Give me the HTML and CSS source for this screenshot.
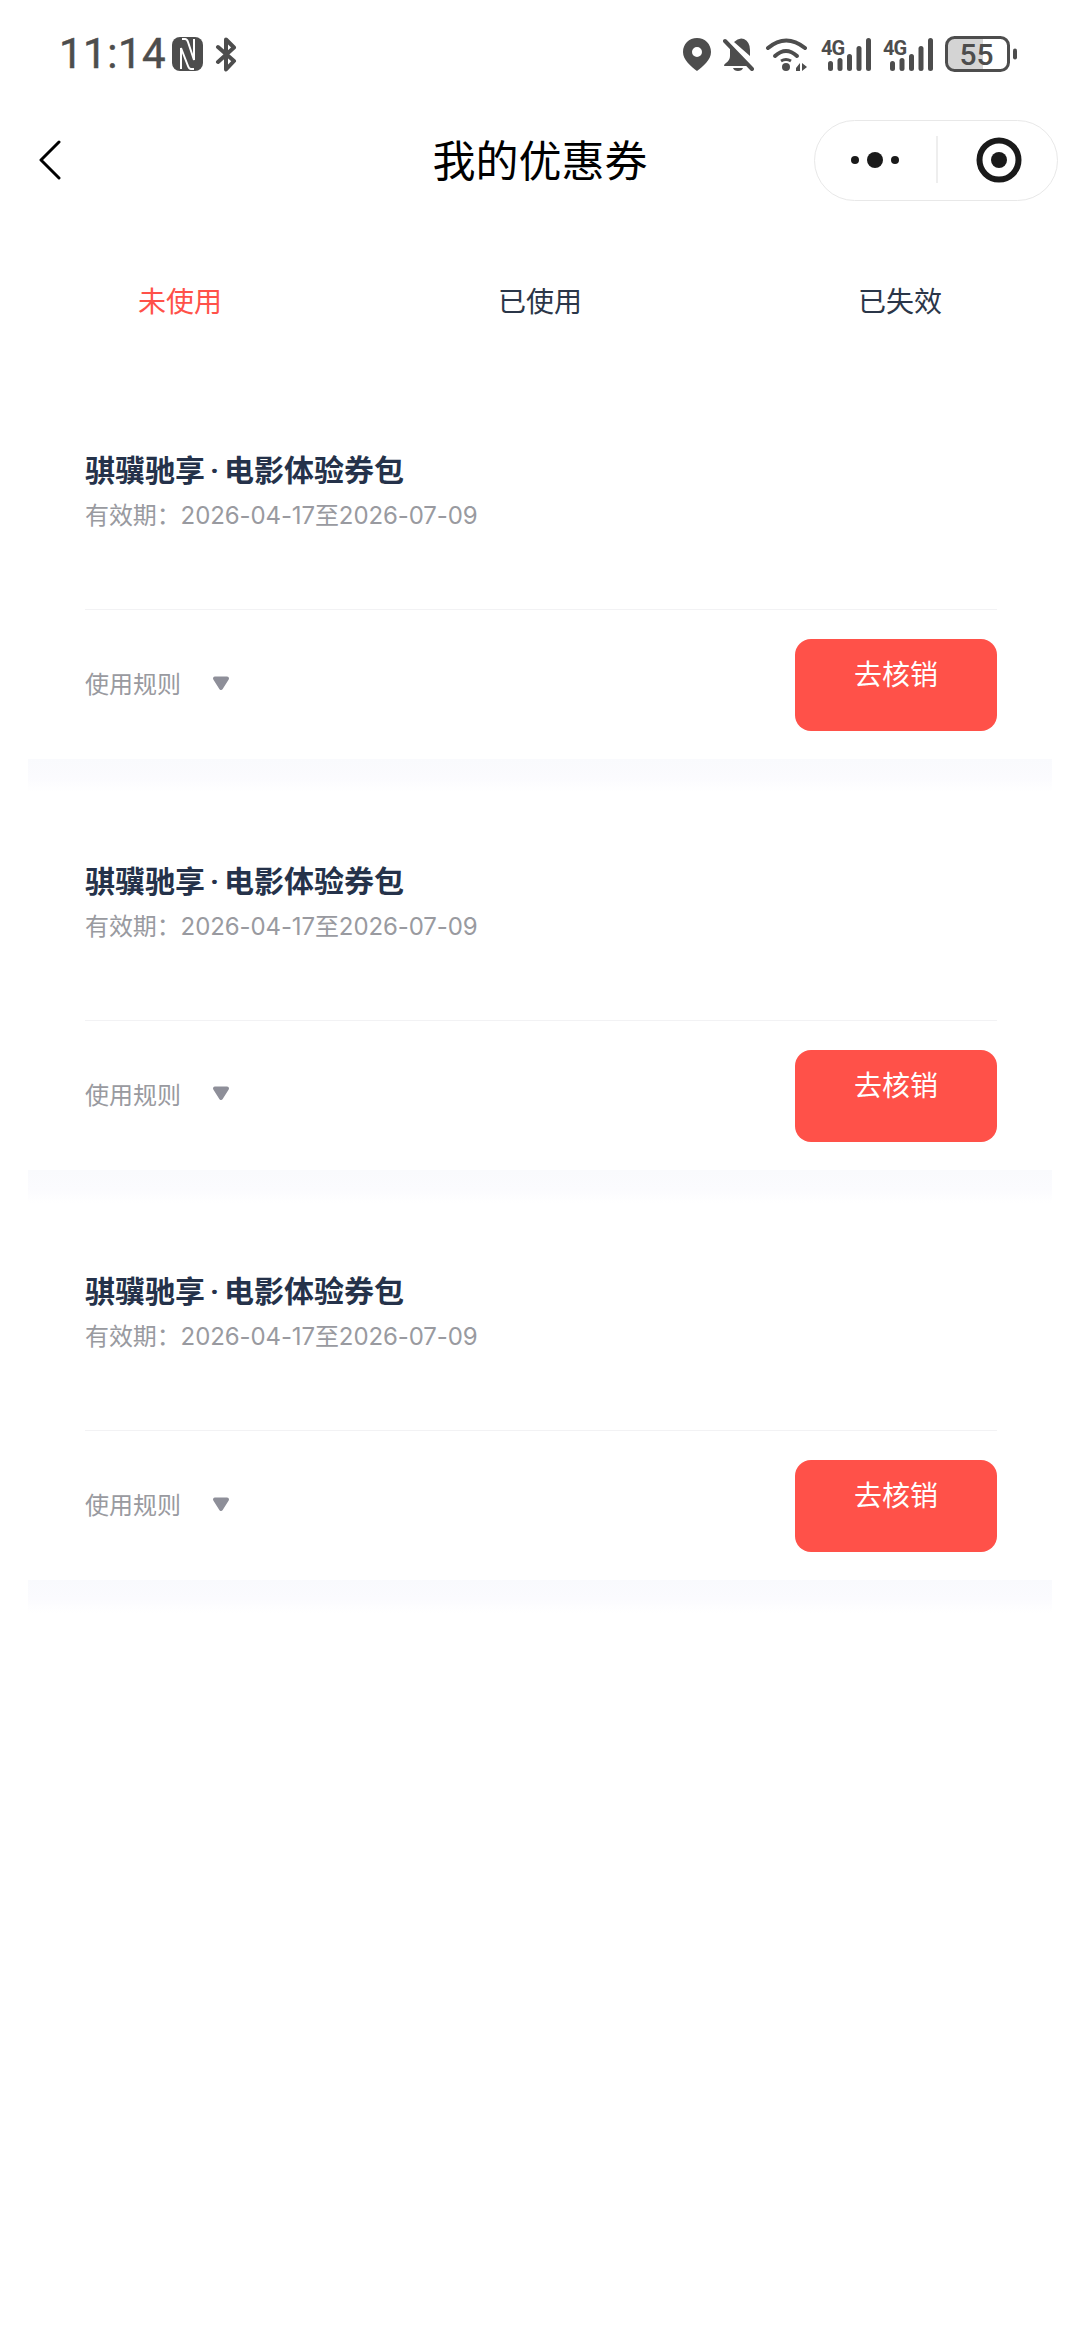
FILE: index.html
```html
<!DOCTYPE html>
<html lang="zh">
  <head>
    <meta charset="utf-8">
    <meta name="viewport" content="width=device-width, initial-scale=1">
    <link rel="stylesheet" href="styles.css">
    <title>我的优惠券</title>
  </head>
  <body>
    <div class="status">
      <div class="status-left">
        <span class="time">11:14</span>
        <svg class="nfc" width="31" height="34" viewBox="0 0 31 34">
          <rect width="31" height="34" rx="8" fill="#4d4d4d"/>
          <path d="M10 2h3q2 0 3 3l6 18V2" fill="none" stroke="#fff" stroke-width="2"/>
          <path d="M9 32V11l7 18q1 3 3 3h3" fill="none" stroke="#fff" stroke-width="2"/>
        </svg>
        <svg class="bt" width="22" height="35" viewBox="0 0 22 35">
          <path d="M3 10 19 24l-8 8.500V2.500l8 8L3 25" fill="none" stroke="#4d4d4d" stroke-width="4" stroke-linecap="round" stroke-linejoin="round"/>
        </svg>
      </div>
      <div class="status-right">
        <svg width="28" height="33" viewBox="0 0 28 33">
          <path fill-rule="evenodd" fill="#4d4d4d" d="M14 0C6 0 0 6 0 14c0 8 8 14.500 14 19 6-4.500 14-11 14-19C28 6 22 0 14 0Zm0 9a5 5 0 1 1 0 10 5 5 0 0 1 0-10Z"/>
        </svg>
        <svg class="gap-bell" width="31" height="33" viewBox="0 0 31 33">
          <path fill="#4d4d4d" d="M11 4q5-5 10-3 6 3 6 11v6ZM7 10v8q0 4-4 7-2 1-2 3h24ZM10 30h10q-1 3-5 3t-5-3Z"/>
          <path d="M4 2l26 27" stroke="#fff" stroke-width="3"/>
          <path d="M2 3l27 28" stroke="#4d4d4d" stroke-width="4" stroke-linecap="round"/>
        </svg>
        <svg class="gap-wifi" width="44" height="33" viewBox="0 0 44 33">
          <g fill="none" stroke="#4d4d4d" stroke-width="4" stroke-linecap="round">
            <path d="M3 10Q21-5 40 10"/>
            <path d="M10 18Q21 8 32 18"/>
          </g>
          <path d="M16 23Q21 20 26 23" fill="none" stroke="#4d4d4d" stroke-width="3"/>
          <circle cx="21" cy="29" r="4" fill="#4d4d4d"/>
          <path fill="#4d4d4d" d="M35 25v8h-4v-3ZM37 25v8l5-4Z"/>
        </svg>
        <svg class="sig gap-sig" width="50" height="37" viewBox="0 -4 50 37">
          <text class="sig-text" x="0" y="17">4G</text>
          <rect x="7" y="23" width="5" height="10" rx="2.500"/>
          <rect x="16.500" y="20" width="5" height="13" rx="2.500"/>
          <rect x="26" y="16" width="5" height="17" rx="2.500"/>
          <rect x="35.500" y="8" width="5" height="25" rx="2.500"/>
          <rect x="45" y="0" width="5" height="33" rx="2.500"/>
        </svg>
        <svg class="sig gap-sig" width="50" height="37" viewBox="0 -4 50 37">
          <text class="sig-text" x="0" y="17">4G</text>
          <rect x="7" y="23" width="5" height="10" rx="2.500"/>
          <rect x="16.500" y="20" width="5" height="13" rx="2.500"/>
          <rect x="26" y="16" width="5" height="17" rx="2.500"/>
          <rect x="35.500" y="8" width="5" height="25" rx="2.500"/>
          <rect x="45" y="0" width="5" height="33" rx="2.500"/>
        </svg>
        <svg class="gap-bat" width="73" height="36" viewBox="0 0 73 36">
          <path d="M8 2h30v32H8a6 6 0 0 1-6-6V8a6 6 0 0 1 6-6Z" fill="#d4d4d4"/>
          <rect x="1.500" y="1.500" width="62" height="33" rx="8" fill="none" stroke="#4d4d4d" stroke-width="3"/>
          <rect x="68" y="12.500" width="4" height="11" rx="2" fill="#4d4d4d"/>
          <text class="bat-text" x="31.500" y="29" text-anchor="middle">55</text>
        </svg>
      </div>
    </div>

    <div class="nav">
      <div class="nav-back">
        <svg width="22" height="40" viewBox="0 0 22 40">
          <path d="M20 2 2 20l18 18" fill="none" stroke="#000" stroke-width="3" stroke-linecap="round" stroke-linejoin="round"/>
        </svg>
      </div>
      <h1 class="nav-title">我的优惠券</h1>
      <div class="capsule">
        <svg width="244" height="81" viewBox="0 0 244 81">
          <circle cx="41" cy="41" r="4" fill="#1a1a1a"/>
          <circle cx="61" cy="41" r="8" fill="#1a1a1a"/>
          <circle cx="81" cy="41" r="4" fill="#1a1a1a"/>
          <path d="M123 17v47" stroke="#e8e8e8" stroke-width="1.500"/>
          <circle cx="185" cy="41" r="19.500" fill="none" stroke="#1a1a1a" stroke-width="6"/>
          <circle cx="185" cy="41" r="8" fill="#1a1a1a"/>
        </svg>
      </div>
    </div>

    <div class="tabs">
      <div class="tab tab-on">未使用</div>
      <div class="tab">已使用</div>
      <div class="tab">已失效</div>
    </div>

    <div class="list">
      <div class="coupon">
        <div class="coupon-title">骐骥驰享<span class="dot">·</span>电影体验券包</div>
        <div class="coupon-date">有效期：2026-04-17至2026-07-09</div>
        <div class="coupon-line"></div>
        <div class="coupon-foot">
          <div class="rules">
            <span>使用规则</span>
            <svg width="18" height="15" viewBox="0 0 18 15"><path d="M3 2.500h12L9 12Z" fill="#8e8f99" stroke="#8e8f99" stroke-width="4" stroke-linejoin="round"/></svg>
          </div>
          <div class="use-btn">去核销</div>
        </div>
      </div>
      <div class="coupon">
        <div class="coupon-title">骐骥驰享<span class="dot">·</span>电影体验券包</div>
        <div class="coupon-date">有效期：2026-04-17至2026-07-09</div>
        <div class="coupon-line"></div>
        <div class="coupon-foot">
          <div class="rules">
            <span>使用规则</span>
            <svg width="18" height="15" viewBox="0 0 18 15"><path d="M3 2.500h12L9 12Z" fill="#8e8f99" stroke="#8e8f99" stroke-width="4" stroke-linejoin="round"/></svg>
          </div>
          <div class="use-btn">去核销</div>
        </div>
      </div>
      <div class="coupon">
        <div class="coupon-title">骐骥驰享<span class="dot">·</span>电影体验券包</div>
        <div class="coupon-date">有效期：2026-04-17至2026-07-09</div>
        <div class="coupon-line"></div>
        <div class="coupon-foot">
          <div class="rules">
            <span>使用规则</span>
            <svg width="18" height="15" viewBox="0 0 18 15"><path d="M3 2.500h12L9 12Z" fill="#8e8f99" stroke="#8e8f99" stroke-width="4" stroke-linejoin="round"/></svg>
          </div>
          <div class="use-btn">去核销</div>
        </div>
      </div>
    </div>
  </body>
</html>
```

FILE: styles.css
```css
html, body {
    margin: 0; padding: 0;
    background: #fff;
}
body {
    width: 1080px; height: 2340px;
    overflow: hidden;
    font-family: "Noto Sans CJK SC", "Noto Sans", sans-serif;
}
svg { display: block; flex: none; }

.status {
    height: 108px; padding: 0 62px 0 59px;
    display: flex; justify-content: space-between; align-items: center;
    box-sizing: border-box;
}
.status-left, .status-right {
    display: flex; align-items: center;
}
.time {
    font-family: Roboto, sans-serif; font-size: 42px; line-height: 50px;
    color: #4d4d4d;
    -webkit-text-stroke: 0.5px #4d4d4d;
    letter-spacing: 0.5px;
    width: 113px;
}
.bt { margin-left: 12px; }
.gap-bell { margin-left: 12px; }
.gap-wifi { margin-left: 11px; }
.gap-sig { margin-left: 12px; }
.gap-bat { margin-left: 12px; }
.sig { margin-top: -4px; }
.sig rect { fill: #4d4d4d; }
.sig-text {
    font-family: Roboto, sans-serif; font-size: 20px; font-weight: 700;
    letter-spacing: -1px;
    fill: #4d4d4d;
}
.bat-text {
    font-family: Roboto, sans-serif; font-size: 30px; font-weight: 500;
    fill: #4d4d4d;
}

.nav {
    height: 104px;
    display: grid; grid-template-columns: 1fr auto 1fr; align-items: center;
}
.nav-back { padding-left: 39px; }
.nav-title {
    margin: 0 0 4px;
    font-size: 43px; font-weight: 400; line-height: 60px;
    color: #000;
}
.capsule {
    justify-self: end;
    margin-right: 22px;
    width: 244px; height: 81px;
    border: 1.500px solid #e8e8e8; border-radius: 41px;
    box-sizing: border-box;
    overflow: hidden;
}
.capsule svg { margin: -1.500px; }

.tabs {
    height: 176px; padding-bottom: 2px;
    display: grid; grid-template-columns: repeat(3, 1fr);
    align-items: center; text-align: center;
    font-size: 28px; color: #2b3648;
}
.tab-on { color: #ff5149; }

.coupon {
    margin: 0 28px; padding: 58px 55px 0 57px;
    box-sizing: border-box;
    height: 410.500px;
    background: linear-gradient(to bottom, #fff 369px, #f9fafd 369px, #fbfbfe 388px, #fff 402px);
}
.coupon-title {
    height: 40px;
    font-size: 30px; font-weight: 700; line-height: 40px;
    color: #25324a;
}
.dot {
    font-family: Roboto, sans-serif;
    margin: 0 5px;
}
.coupon-date {
    margin-top: 11px;
    font-family: Inter, "Noto Sans CJK SC", sans-serif;
    font-size: 24px; line-height: 34px;
    letter-spacing: -0.1px;
    color: #999aa0;
}
.coupon-line {
    margin-top: 76px;
    border-top: 1px solid #f2f2f4;
}
.coupon-foot {
    height: 149px; padding-top: 29px; padding-bottom: 28px;
    box-sizing: border-box;
    display: flex; justify-content: space-between; align-items: center;
}
.rules {
    display: flex; align-items: center; gap: 31px;
    font-size: 24px; line-height: 34px;
    color: #999aa0;
    padding-bottom: 4px;
}
.use-btn {
    width: 202px; height: 92px;
    background: #ff5149; border-radius: 16px;
    color: #fff;
    font-size: 28px; line-height: 69px; text-align: center;
}
```
